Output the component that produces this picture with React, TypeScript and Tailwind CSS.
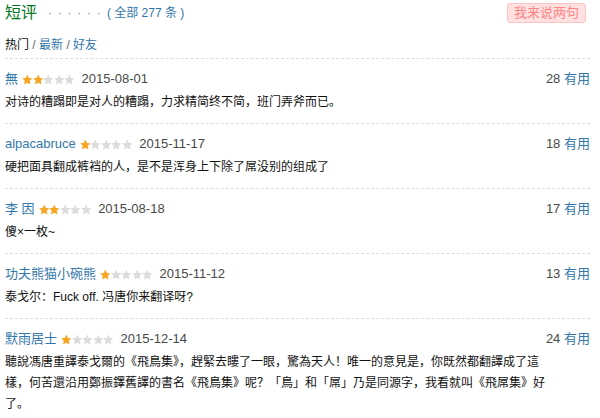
import type { ReactElement } from "react";

interface Review {
  name: string;
  rating: number;
  date: string;
  votes: number;
  content: string;
}

const reviews: Review[] = [
  {
    name: "無",
    rating: 2,
    date: "2015-08-01",
    votes: 28,
    content: "对诗的糟蹋即是对人的糟蹋，力求精简终不简，班门弄斧而已。",
  },
  {
    name: "alpacabruce",
    rating: 1,
    date: "2015-11-17",
    votes: 18,
    content: "硬把面具翻成裤裆的人，是不是浑身上下除了屌没别的组成了",
  },
  {
    name: "李 因",
    rating: 2,
    date: "2015-08-18",
    votes: 17,
    content: "傻×一枚~",
  },
  {
    name: "功夫熊猫小碗熊",
    rating: 1,
    date: "2015-11-12",
    votes: 13,
    content: "泰戈尔：Fuck off. 冯唐你来翻译呀?",
  },
  {
    name: "默雨居士",
    rating: 1,
    date: "2015-12-14",
    votes: 24,
    content:
      "聽說馮唐重譯泰戈爾的《飛鳥集》，趕緊去瞜了一眼，驚為天人！唯一的意見是，你既然都翻譯成了這樣，何苦還沿用鄭振鐸舊譯的書名《飛鳥集》呢？「鳥」和「屌」乃是同源字，我看就叫《飛屌集》好了。",
  },
];

function Stars({ rating }: { rating: number }): ReactElement {
  return (
    <span className="flex items-center">
      {[0, 1, 2, 3, 4].map((i) => (
        <svg key={i} width="10.5" height="11" viewBox="0.5 0.5 23 22">
          <path
            d="M12 0.8l3.4 7.2 7.8 1-5.7 5.4 1.5 7.8L12 18.4l-7 3.8 1.5-7.8L0.8 9l7.8-1z"
            fill={i < rating ? "#f9a524" : "#dcdcdc"}
          />
        </svg>
      ))}
    </span>
  );
}

function ReviewItem({ review }: { review: Review }): ReactElement {
  return (
    <div className="border-b border-dashed border-[#dddddd] pt-[10px] pb-[10px]">
      <div className="flex h-[20px] items-center text-[13px]">
        <span className="text-[#3377aa]">{review.name}</span>
        <span className="ml-[4px]">
          <Stars rating={review.rating} />
        </span>
        <span className="ml-[7px] text-[#494949]">{review.date}</span>
        <span className="ml-auto text-[#494949]">
          {review.votes} <span className="text-[#3377aa]">有用</span>
        </span>
      </div>
      <p className="mt-[3px] w-[556px] text-[12px] leading-[21px] text-[#111111]">
        {review.content}
      </p>
    </div>
  );
}

export default function App(): ReactElement {
  return (
    <div
      className="h-[418px] w-[600px] overflow-hidden bg-white"
      style={{ fontFamily: '"Liberation Sans", Arial, "Noto Sans CJK SC", sans-serif' }}
    >
      <div className="pl-[5px] pr-[10px]">
        <div className="flex h-[26px] items-center">
          <span className="text-[16px] text-[#007722]">短评</span>
          <span className="ml-[11px] text-[12px] tracking-[1.2px] text-[#888888]">· · · · · ·</span>
          <span className="ml-[5px] text-[12px] text-[#3377aa]">( 全部 277 条 )</span>
          <span className="ml-auto mr-[4px] rounded-[3px] border border-[#ffc4c4] bg-[#ffe1e1] px-[6px] text-[13px] leading-[18px] text-[#ff8585]">
            我来说两句
          </span>
        </div>
        <div className="mt-[10px] text-[12px] leading-[18px] text-[#111111]">
          热门 <span className="text-[#666666]">/</span>{" "}
          <span className="text-[#3377aa]">最新</span>{" "}
          <span className="text-[#666666]">/</span>{" "}
          <span className="text-[#3377aa]">好友</span>
        </div>
        <div className="mt-[4px] border-b border-dashed border-[#dddddd]" />
        {reviews.map((r) => (
          <ReviewItem key={r.name} review={r} />
        ))}
      </div>
    </div>
  );
}
